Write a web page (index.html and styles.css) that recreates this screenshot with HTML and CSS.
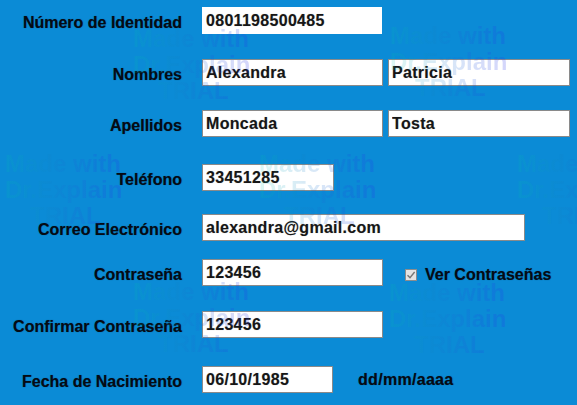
FILE: index.html
```html
<!DOCTYPE html>
<html lang="es">
<head>
<meta charset="utf-8">
<title>Registro</title>
<link rel="stylesheet" href="styles.css">
</head>
<body>
<div class="form">
  <div class="row r1">
    <label class="lbl">Número de Identidad</label>
    <input class="fld w180 noborder" type="text" value="0801198500485" readonly>
  </div>
  <div class="row r2">
    <label class="lbl">Nombres</label>
    <input class="fld w181" type="text" value="Alexandra" readonly>
    <input class="fld w182 second" type="text" value="Patricia" readonly>
  </div>
  <div class="row r3">
    <label class="lbl">Apellidos</label>
    <input class="fld w181" type="text" value="Moncada" readonly>
    <input class="fld w182 second" type="text" value="Tosta" readonly>
  </div>
  <div class="row r4">
    <label class="lbl">Teléfono</label>
    <input class="fld w132" type="text" value="33451285" readonly>
  </div>
  <div class="row r5">
    <label class="lbl">Correo Electrónico</label>
    <input class="fld w323" type="text" value="alexandra@gmail.com" readonly>
  </div>
  <div class="row r6">
    <label class="lbl">Contraseña</label>
    <input class="fld w181" type="text" value="123456" readonly>
    <span class="check">
      <span class="box"><svg width="10" height="10" viewBox="0 0 10 10"><path d="M1.5 5.2 L4 7.6 L8.6 2" fill="none" stroke="#777" stroke-width="1.4"/></svg></span>
      <span class="check-text">Ver Contraseñas</span>
    </span>
  </div>
  <div class="row r7">
    <label class="lbl">Confirmar Contraseña</label>
    <input class="fld w181" type="text" value="123456" readonly>
  </div>
  <div class="row r8">
    <label class="lbl">Fecha de Nacimiento</label>
    <input class="fld w131" type="text" value="06/10/1985" readonly>
    <span class="hint">dd/mm/aaaa</span>
  </div>
</div>

<div class="wm" style="left:133px;top:26px">Made with<br>Dr.Explain<br><span class="t">TRIAL</span></div>
<div class="wm" style="left:390px;top:23px">Made with<br>Dr.Explain<br><span class="t">TRIAL</span></div>
<div class="wm" style="left:5px;top:151px">Made with<br>Dr.Explain<br><span class="t">TRIAL</span></div>
<div class="wm" style="left:259px;top:151px">Made with<br>Dr.Explain<br><span class="t">TRIAL</span></div>
<div class="wm" style="left:517px;top:151px">Made with<br>Dr.Explain<br><span class="t">TRIAL</span></div>
<div class="wm" style="left:133px;top:279px">Made with<br>Dr.Explain<br><span class="t">TRIAL</span></div>
<div class="wm" style="left:389px;top:280px">Made with<br>Dr.Explain<br><span class="t">TRIAL</span></div>
</body>
</html>
```

FILE: styles.css
```css
html, body {
  margin: 0;
  padding: 0;
  background: #0b8bd6;
  width: 577px;
  height: 405px;
  overflow: hidden;
  position: relative;
}

.form {
  display: flex;
  flex-direction: column;
  padding-top: 7px;
  font-family: "Liberation Sans", Arial, sans-serif;
  font-weight: 700;
  font-size: 16px;
}

.row {
  display: flex;
  align-items: center;
  height: 27px;
}

.r2 { margin-top: 25px; }
.r3 { margin-top: 24px; }
.r4 { margin-top: 27px; }
.r5 { margin-top: 23px; }
.r6 { margin-top: 18px; }
.r7 { margin-top: 25px; }
.r8 { margin-top: 28px; }

.lbl {
  flex: 0 0 182px;
  text-align: right;
  margin-right: 20px;
  padding-top: 5px;
  color: #050a14;
  white-space: nowrap;
  text-shadow: 0 0 1px rgba(0, 0, 0, 0.45);
}

.fld {
  box-sizing: border-box;
  height: 27px;
  margin: 0;
  padding: 1px 0 0 3px;
  border: 1px solid #8a8a8a;
  background: #fff;
  font-family: "Liberation Sans", Arial, sans-serif;
  font-weight: 700;
  font-size: 16px;
  color: #161616;
  letter-spacing: 0.3px;
  outline: none;
  text-shadow: 0 0 1px rgba(0, 0, 0, 0.3);
}

.noborder { border-color: #fff; }

.w180 { width: 180px; }
.w181 { width: 181px; }
.w182 { width: 182px; }
.w132 { width: 132px; }
.w323 { width: 323px; }
.w131 { width: 131px; }

.second { margin-left: 5px; }

.check {
  display: flex;
  align-items: center;
  margin-left: 22px;
  padding-top: 5px;
}

.box {
  box-sizing: border-box;
  width: 12px;
  height: 12px;
  border: 1px solid #8c8c8c;
  background: #e4e4e4;
  display: flex;
  align-items: center;
  justify-content: center;
  margin-right: 8px;
}

.box svg { display: block; }

.check-text, .hint {
  color: #050a14;
  white-space: nowrap;
  text-shadow: 0 0 1px rgba(0, 0, 0, 0.45);
}

.hint {
  margin-left: 25px;
  font-size: 16px;
  letter-spacing: 0.3px;
  padding-top: 1px;
}

.wm {
  position: absolute;
  font-family: "Liberation Sans", Arial, sans-serif;
  font-weight: 700;
  font-size: 24px;
  line-height: 26px;
  white-space: nowrap;
  text-align: left;
  background: linear-gradient(90deg, rgba(0, 200, 170, 0.14), rgba(40, 50, 235, 0.2));
  -webkit-background-clip: text;
  background-clip: text;
  color: transparent;
  pointer-events: none;
}

.wm .t {
  display: inline-block;
  padding-left: 25px;
}
```
